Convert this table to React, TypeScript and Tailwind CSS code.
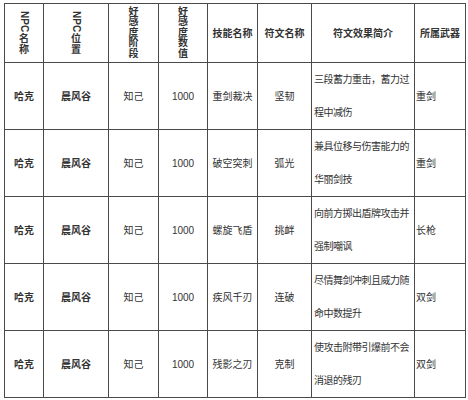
const rows = [
  { skill: "重剑裁决", rune: "坚韧", desc: ["三段蓄力重击，蓄力过", "程中减伤"], weapon: "重剑" },
  { skill: "破空突刺", rune: "弧光", desc: ["兼具位移与伤害能力的", "华丽剑技"], weapon: "重剑" },
  { skill: "螺旋飞盾", rune: "挑衅", desc: ["向前方掷出盾牌攻击并", "强制嘲讽"], weapon: "长枪" },
  { skill: "疾风千刃", rune: "连破", desc: ["尽情舞剑冲刺且威力随", "命中数提升"], weapon: "双剑" },
  { skill: "残影之刃", rune: "克制", desc: ["使攻击附带引爆前不会", "消退的残刃"], weapon: "双剑" },
]

const heights = ["h-[66px]", "h-[66px]", "h-[65px]", "h-[67px]", "h-[67px]"]

const cell = "border border-[#4a4a4a] p-0 align-middle"

// header text stacked top to bottom, latin part turned on its side
const Vertical = ({ latin, chars }: { latin?: string; chars: string }) => (
  <div className="flex flex-col items-center">
    {latin && (
      <div className="shrink-0 [writing-mode:vertical-rl] leading-[11px] mb-[2px] font-['Liberation_Sans',sans-serif]">
        {latin}
      </div>
    )}
    {chars.split("").map((c, i) => (
      <div key={i} className="shrink-0 h-[10.5px] leading-[10.5px] text-[10px]">
        {c}
      </div>
    ))}
  </div>
)

const App = () => {
  return (
    <div className="w-[468px] h-[400px] bg-white pl-[4px] pt-[3px] text-[#333] text-[10px] font-['Liberation_Sans','Noto_Sans_CJK_SC',sans-serif]">
      <table className="table-fixed border-collapse w-[461px]">
        <colgroup>
          <col className="w-[39px]" />
          <col className="w-[65px]" />
          <col className="w-[50px]" />
          <col className="w-[49px]" />
          <col className="w-[50px]" />
          <col className="w-[54px]" />
          <col className="w-[103px]" />
          <col className="w-[51px]" />
        </colgroup>
        <thead>
          <tr className="h-[59px] font-bold">
            <th className={cell}>
              <Vertical latin="NPC" chars="名称" />
            </th>
            <th className={cell}>
              <Vertical latin="NPC" chars="位置" />
            </th>
            <th className={cell}>
              <Vertical chars="好感度阶段" />
            </th>
            <th className={cell}>
              <Vertical chars="好感度数值" />
            </th>
            <th className={cell}>技能名称</th>
            <th className={cell}>符文名称</th>
            <th className={cell}>符文效果简介</th>
            <th className={cell}>所属武器</th>
          </tr>
        </thead>
        <tbody>
          {rows.map((r, i) => (
            <tr key={r.skill} className={heights[i]}>
              <td className={`${cell} text-center font-bold`}>哈克</td>
              <td className={`${cell} text-center font-bold`}>晨风谷</td>
              <td className={`${cell} text-center`}>知己</td>
              <td className={`${cell} text-center`}>1000</td>
              <td className={`${cell} text-center`}>{r.skill}</td>
              <td className={`${cell} text-center`}>{r.rune}</td>
              <td className={`${cell} pl-[2px] leading-[33px] whitespace-nowrap tracking-[-0.5px]`}>
                {r.desc.map((line) => (
                  <div key={line}>{line}</div>
                ))}
              </td>
              <td className={`${cell} pl-[1px]`}>{r.weapon}</td>
            </tr>
          ))}
        </tbody>
      </table>
    </div>
  )
}

export default App
